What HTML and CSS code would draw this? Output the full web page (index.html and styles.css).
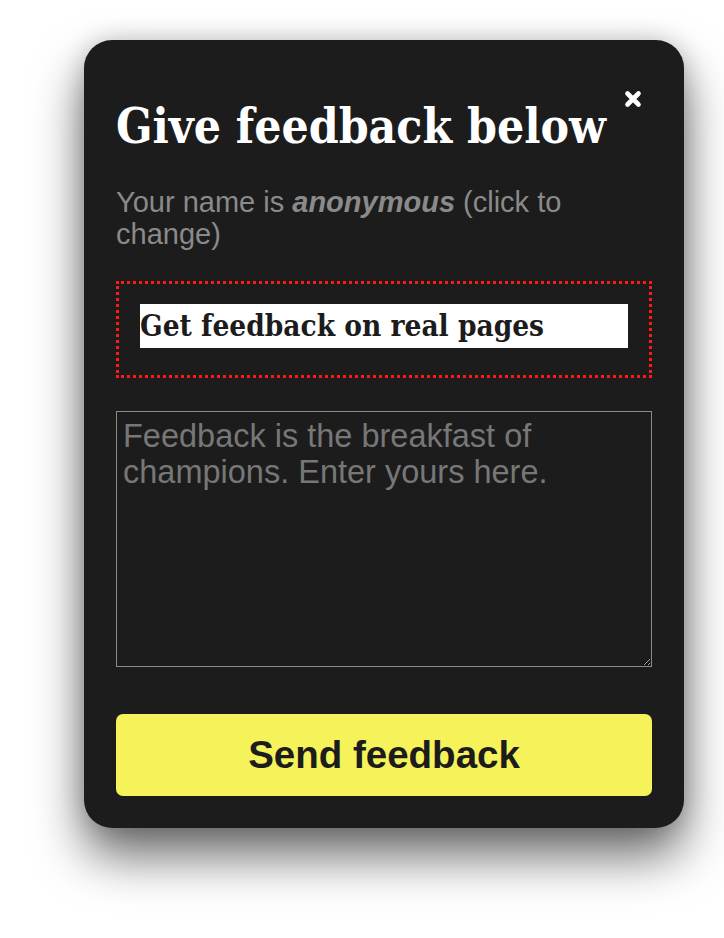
FILE: index.html
```html
<!DOCTYPE html>
<html lang="en">
<head>
<meta charset="utf-8">
<title>Give feedback</title>
<link rel="stylesheet" href="styles.css">
</head>
<body>
<div class="card">
  <button class="close" aria-label="Close">
    <svg width="18" height="18" viewBox="0 0 18 18"><path d="M3.5 3.5 L14.5 14.5 M14.5 3.5 L3.5 14.5" stroke="#fff" stroke-width="4.6" stroke-linecap="round"/></svg>
  </button>
  <h1 class="title">Give feedback below</h1>
  <p class="name">Your name is <b><i>anonymous</i></b> (click to change)</p>
  <div class="target">
    <h2 class="target-title">Get feedback on real pages</h2>
  </div>
  <textarea class="feedback" placeholder="Feedback is the breakfast of champions. Enter yours here."></textarea>
  <button class="send">Send feedback</button>
</div>
</body>
</html>
```

FILE: styles.css
```css
html, body {
  margin: 0;
  background: #ffffff;
}
body {
  box-sizing: border-box;
  min-height: 938px;
  padding: 40px 0 110px 84px;
}
.card {
  position: relative;
  width: 600px;
  box-sizing: border-box;
  background: #1c1c1c;
  border-radius: 28px;
  padding: 54px 32px 32px 32px;
  box-shadow: 0 28px 50px rgba(0, 0, 0, 0.58), 0 0 24px rgba(0, 0, 0, 0.18);
}
.close {
  position: absolute;
  top: 50px;
  left: 540px;
  width: 18px;
  height: 18px;
  padding: 0;
  border: 0;
  background: transparent;
  display: block;
}
.close svg { display: block; }
.title {
  margin: 0;
  font-family: "DejaVu Serif Condensed", "DejaVu Serif", serif;
  font-stretch: condensed;
  font-weight: bold;
  font-size: 47.6px;
  line-height: 64px;
  color: #ffffff;
}
.name {
  margin: 28px 0 0 0;
  font-family: "Liberation Sans", Arial, sans-serif;
  font-size: 29px;
  line-height: 32px;
  color: #8a8a8a;
}
.name b { color: #8a8a8a; }
.target {
  margin-top: 31px;
  border: 3px dotted #ff1a1a;
  padding: 20px 21px 27px 21px;
}
.target-title {
  margin: 0;
  background: #ffffff;
  color: #1c1c1c;
  font-family: "DejaVu Serif Condensed", "DejaVu Serif", serif;
  font-stretch: condensed;
  font-weight: bold;
  font-size: 29.5px;
  line-height: 44px;
}
.feedback {
  display: block;
  box-sizing: border-box;
  margin-top: 33px;
  width: 536px;
  height: 256px;
  background: #1c1c1c;
  border: 1px solid #8c8c8c;
  padding: 6px;
  font-family: "Liberation Sans", Arial, sans-serif;
  font-size: 32.5px;
  line-height: 36px;
  color: #ddd;
  resize: vertical;
}
.feedback::placeholder { color: #777; }
.send {
  display: block;
  margin-top: 47px;
  width: 536px;
  height: 82px;
  border: 0;
  border-radius: 7px;
  background: #f5f25a;
  color: #1c1c1c;
  font-family: "Liberation Sans", Arial, sans-serif;
  font-weight: bold;
  font-size: 38.5px;
}
```
